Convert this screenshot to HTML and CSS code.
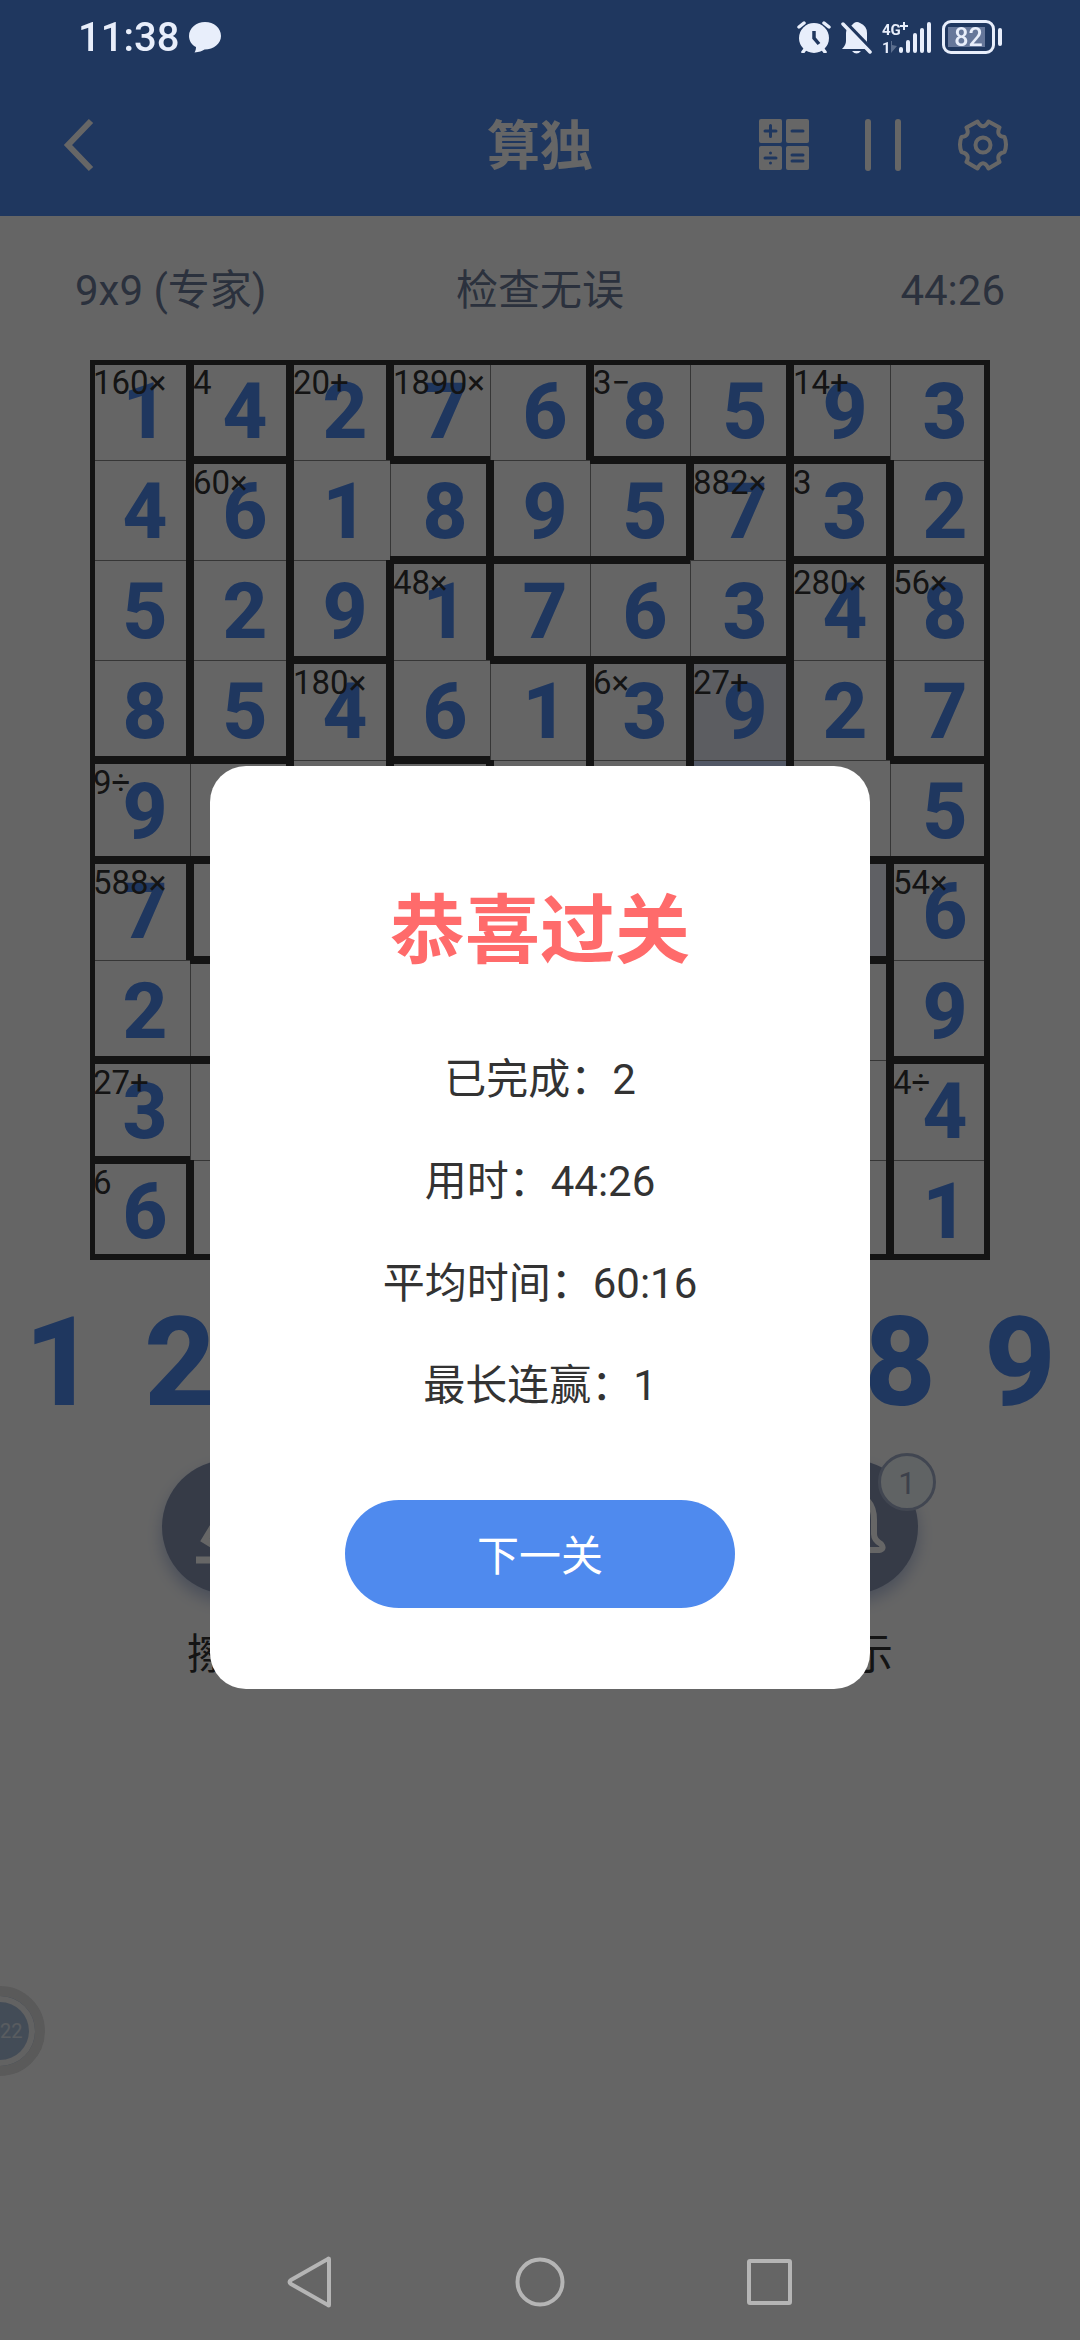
FILE: index.html
```html
<!DOCTYPE html>
<html lang="zh-CN">
<head>
    <meta charset="UTF-8">
    <meta name="viewport" content="width=device-width, initial-scale=1.0">
    <title>算独</title>
    <link rel="stylesheet" href="styles.css">
</head>
<body>

    <!-- Header -->
    <header class="header">
        <div class="status-bar">
            <div class="status-left">
                <span class="clock">11:38</span>
                <svg width="32" height="32" viewBox="0 0 32 32"><path fill="currentColor" d="M16 1C7.500 1 0 7 0 15c0 5 3 9 7 11 0 2-.5 4-1.500 5.500C10 31 13.500 30 15.500 28.500 25 28.500 32 22.500 32 15 32 7 25 1 16 1z"/></svg>
            </div>
            <div class="status-right">
                <svg width="34" height="32" viewBox="0 0 34 32">
                    <path d="M2 6l5-4M32 6l-5-4M6 31l3-4M28 31l-3-4" stroke="currentColor" stroke-width="3.500" stroke-linecap="round"/>
                    <circle cx="17" cy="17" r="15" fill="currentColor"/>
                    <path class="cut" d="M17 10v7l5 6" stroke-width="3.500"/>
                </svg>
                <svg class="mute" width="31" height="33" viewBox="0 0 31 33">
                    <path fill="currentColor" d="M10 5q2-2 3-3 3-2 6 0 7 3 7 10v9l3 7H1q4-4 4-8v-8q0-5 5-7zM11 30h9q-4.500 5-9 0z"/>
                    <path class="cut" d="M4 1l28 29" stroke-width="4"/>
                    <path d="M2 3l27 28" stroke="currentColor" stroke-width="3.500" stroke-linecap="round"/>
                </svg>
                <svg class="signal" width="50" height="33" viewBox="0 0 50 33" fill="currentColor">
                    <text x="0" y="14">4G</text>
                    <path d="M21 1h2v3h3v2h-3v3h-2V6h-3V4h3z"/>
                    <text x="0" y="32">1</text>
                    <path d="M9 20v12l6-7-5-1v-4z" opacity=".3"/>
                    <rect x="17" y="26" width="4" height="6" rx="2"/>
                    <rect x="24" y="19" width="4" height="13" rx="2"/>
                    <rect x="31" y="12" width="4" height="20" rx="2"/>
                    <rect x="38" y="7" width="4" height="25" rx="2"/>
                    <rect x="45" y="1" width="4" height="31" rx="2"/>
                </svg>
                <div class="battery">82</div>
            </div>
        </div>
        <div class="toolbar">
            <button class="icon-btn" aria-label="返回">
                <svg width="32" height="54" viewBox="0 0 32 54" fill="none" stroke="currentColor" stroke-width="6"><path d="M28 3L5 27l23 24"/></svg>
            </button>
            <h1 class="title">算独</h1>
            <div class="toolbar-actions">
                <button class="icon-btn" aria-label="运算">
                    <svg width="50" height="52" viewBox="0 0 50 52">
                        <g fill="currentColor">
                            <rect width="23" height="24" rx="2"/><rect x="27" width="23" height="24" rx="2"/>
                            <rect y="27" width="23" height="24" rx="2"/><rect x="27" y="27" width="23" height="24" rx="2"/>
                        </g>
                        <g class="ops">
                            <path d="M6 12h11M11.500 6.500v11M33 12h11M6 39h11M33 36h11M33 42h11"/>
                            <path d="M11.500 34v.1M11.500 44v.1"/>
                        </g>
                    </svg>
                </button>
                <button class="icon-btn" aria-label="暂停">
                    <svg width="36" height="52" viewBox="0 0 36 52" fill="currentColor"><rect width="6" height="52" rx="3"/><rect x="30" width="6" height="52" rx="3"/></svg>
                </button>
                <button class="icon-btn" aria-label="设置">
                    <svg width="52" height="52" viewBox="0 0 51 52" fill="none" stroke="currentColor" stroke-width="4" stroke-linejoin="round">
                        <path d="M20 2.500L9 8.500Q13 17 4 18Q1 25.500 4 33Q13 35 9 43L20 49.500Q25.500 39 31 49.500L42 43Q38 35 47 33Q50 25.500 47 18Q38 17 42 8.500L31 2.500Q25.500 12 20 2.500z"/>
                        <circle cx="25.500" cy="26" r="7.500"/>
                    </svg>
                </button>
            </div>
        </div>
    </header>

    <!-- Game -->
    <main class="game">
        <div class="info">
            <span>9x9 (专家)</span>
            <span>检查无误</span>
            <span class="info-time">44:26</span>
        </div>

        <div class="board" id="board"></div>

        <div class="keypad">
            <button>1</button>
            <button>2</button>
            <button>3</button>
            <button>4</button>
            <button>5</button>
            <button>6</button>
            <button>7</button>
            <button>8</button>
            <button>9</button>
        </div>

        <div class="tools">
            <button class="tool">
                <span class="tool-circle">
                    <svg viewBox="0 0 134 134" fill="none" stroke="currentColor" stroke-width="7"><path d="M34 100h66M43 80l28-46 26 16-28 46z"/></svg>
                </span>
                擦除
            </button>
            <button class="tool">
                <span class="tool-circle">
                    <svg viewBox="0 0 134 134" fill="none" stroke="currentColor" stroke-width="7"><path d="M40 94l4-18 38-38 14 14-38 38z"/></svg>
                </span>
                笔记
            </button>
            <button class="tool">
                <span class="tool-circle">
                    <svg viewBox="0 0 134 134" fill="none" stroke="currentColor" stroke-width="6" stroke-linecap="round" stroke-linejoin="round"><path d="M67 34q-22 2-22 26v14q0 6-6 10-6 6 0 6h56q6-1 2-6-7-4-7-10V60q0-24-23-26zM59 101h16"/></svg>
                    <span class="badge">1</span>
                </span>
                提示
            </button>
        </div>
    </main>

    <div class="ball">22</div>

    <!-- System navigation -->
    <nav class="nav-bar">
        <button class="icon-btn" aria-label="后退"><svg width="50" height="52" viewBox="0 0 50 52"><path d="M44 3v46q0 1-1 0L6 28q-3-2 0-4L43 3q1-1 1 0z"/></svg></button>
        <button class="icon-btn" aria-label="主屏幕"><svg width="50" height="52" viewBox="0 0 50 52"><circle cx="25" cy="26" r="22.500"/></svg></button>
        <button class="icon-btn" aria-label="最近任务"><svg width="50" height="52" viewBox="0 0 50 52"><rect x="4" y="5" width="41" height="42" rx="1"/></svg></button>
    </nav>

    <!-- Win dialog -->
    <div class="overlay">
        <div class="dialog" role="dialog" aria-labelledby="winTitle">
            <h2 id="winTitle">恭喜过关</h2>
            <p>已完成：2</p>
            <p>用时：44:26</p>
            <p>平均时间：60:16</p>
            <p>最长连赢：1</p>
            <button class="next-btn">下一关</button>
        </div>
    </div>

    <script src="script.js"></script>
</body>
</html>
```
FILE: styles.css
```css
* {
    box-sizing: border-box;
}

body {
    margin: 0;
    min-height: 100vh;
    display: flex;
    flex-direction: column;
    overflow-x: hidden;
    background-color: #fdfdfd;
    color: #333;
    font-family: Roboto, "Noto Sans CJK SC", sans-serif;
    font-size: 42px;
}

button {
    border: none;
    padding: 0;
    background: none;
    color: inherit;
    font: inherit;
    cursor: pointer;
}

svg {
    display: block;
}

/* Header */
.header {
    background-color: #4f8aee;
    color: #fff;
}

.status-bar {
    position: relative;
    z-index: 20;
    display: flex;
    justify-content: space-between;
    height: 74px;
    padding: 0 78px;
    color: #e8eefb;
}

.status-left,
.status-right {
    display: flex;
    align-items: center;
    gap: 10px;
}

.clock {
    font-size: 40px;
    font-weight: 500;
}

.cut {
    fill: none;
    stroke: #20375f;
}

.signal {
    overflow: visible;
    font-size: 15px;
    font-weight: 700;
}

/* Battery with a cap on the right */
.battery {
    position: relative;
    width: 53px;
    height: 34px;
    margin-right: 7px;
    border: 3px solid #e8eefb;
    border-radius: 9px;
    background: linear-gradient(#66779a, #66779a) 3px 4px / 37px 20px no-repeat;
    font-size: 25px;
    font-weight: 500;
    line-height: 30px;
    text-align: center;
}

.battery::after {
    content: "";
    position: absolute;
    top: 5px;
    right: -10px;
    width: 4px;
    height: 18px;
    border-radius: 2px;
    background-color: #e8eefb;
}

.toolbar {
    display: grid;
    grid-template-columns: 1fr auto 1fr;
    align-items: center;
    height: 142px;
    padding: 0 63px;
}

.title {
    margin: 0;
    padding-top: 4px;
    font-size: 53px;
    font-weight: 700;
    line-height: 60px;
}

.toolbar-actions {
    display: flex;
    justify-content: flex-end;
    gap: 56px;
    padding-right: 8px;
}

.ops {
    fill: none;
    stroke: #4f8aee;
    stroke-width: 3;
    stroke-linecap: round;
}

/* Game */
.info {
    display: grid;
    grid-template-columns: 1fr auto 1fr;
    align-items: baseline;
    height: 144px;
    padding: 45px 75px 0;
    color: #6b7a99;
    line-height: 60px;
}

.info-time {
    text-align: right;
}

.board {
    display: grid;
    grid-template-columns: repeat(9, 1fr);
    margin: 0 90px;
}

/* Cage walls are inner shadows, half of each wall in either cell */
.cell {
    --t: 0px;
    --r: 0px;
    --b: 0px;
    --l: 0px;
    position: relative;
    display: flex;
    align-items: center;
    justify-content: center;
    aspect-ratio: 1;
    padding: 4px 0 0 10px;
    color: #4f8aee;
    font-size: 78px;
    font-weight: 800;
    line-height: 1;
    box-shadow:
        inset var(--l) 0 #333,
        inset calc(-1 * var(--r)) 0 #333,
        inset 0 var(--t) #333,
        inset 0 calc(-1 * var(--b)) #333,
        inset 1px 1px #888;
}

.wall-t { --t: 4px; }
.wall-r { --r: 4px; }
.wall-b { --b: 4px; }
.wall-l { --l: 4px; }
.edge-t { --t: 5px; }
.edge-r { --r: 6px; }
.edge-b { --b: 6px; }
.edge-l { --l: 5px; }

.cage-mate {
    background-color: #e6e9f2;
}

.selected {
    background-color: #cddcff;
}

.same-digit {
    background-color: #edf0fb;
}

.clue {
    position: absolute;
    top: 5px;
    left: 3px;
    color: #333;
    font-size: 33px;
    font-weight: 400;
    line-height: 36px;
}

.keypad {
    display: grid;
    grid-template-columns: repeat(9, 1fr);
    height: 200px;
    color: #4f8aee;
    font-size: 124px;
    font-weight: 800;
    line-height: 206px;
}

.tools {
    display: flex;
    justify-content: space-between;
    padding: 0 162px;
}

.tool {
    line-height: 60px;
}

.tool-circle {
    position: relative;
    display: block;
    width: 134px;
    height: 134px;
    margin-bottom: 31px;
    border-radius: 50%;
    background-color: #8794b2;
    box-shadow: 0 8px 16px rgba(80, 110, 180, 0.4);
    color: #fff;
}

.badge {
    position: absolute;
    top: -7px;
    right: -18px;
    width: 58px;
    height: 58px;
    border: 3px solid #a4b0ca;
    border-radius: 50%;
    background-color: #f0f7fa;
    color: #98a3bb;
    font-size: 31px;
    line-height: 56px;
}

/* Floating ball, docked to the left edge */
.ball {
    position: fixed;
    top: 1986px;
    left: -45px;
    width: 90px;
    height: 90px;
    border: 10px solid #e0e0e0;
    border-radius: 50%;
    background-color: #a9bfda;
    box-shadow: inset 0 0 0 6px #f4f4f4;
    color: #dfe7f0;
    font-size: 20px;
    line-height: 70px;
    padding-left: 35px;
}

.nav-bar {
    position: relative;
    z-index: 20;
    display: flex;
    align-items: center;
    justify-content: center;
    gap: 180px;
    height: 116px;
    margin-top: auto;
    color: #b5b5b5;
}

.nav-bar svg {
    fill: none;
    stroke: currentColor;
    stroke-width: 4;
}

/* Win dialog */
.overlay {
    position: fixed;
    inset: 0;
    z-index: 10;
    display: flex;
    align-items: center;
    justify-content: center;
    padding-top: 115px;
    background-color: rgba(0, 0, 0, 0.6);
}

.dialog {
    display: flex;
    flex-direction: column;
    align-items: center;
    width: 61.1%;
    padding: 115px 0 81px;
    border-radius: 36px;
    background-color: #fff;
}

.dialog h2 {
    margin: 0 0 48px;
    color: #ff6b6b;
    font-size: 75px;
    font-weight: 700;
    line-height: 100px;
}

.dialog p {
    margin: 0;
    line-height: 102px;
}

.next-btn {
    width: 390px;
    height: 108px;
    margin-top: 63px;
    padding-bottom: 4px;
    border-radius: 54px;
    background-color: #4f8aee;
    color: #fff;
}
```
FILE: script.js
```js
const size = 9;

// One letter per cage
const cages = [
    "ABCDDEEFF",
    "AGCCDDHIF",
    "AGCJHHHKL",
    "AGMJJNOKL",
    "PPMQJNOKK",
    "RSSSSSSTU",
    "RRRRRVVVU",
    "WWWWWVVVX",
    "YWWWWWVVX"
];

const digits = [
    "142768593",
    "461895732",
    "529176348",
    "854613927",
    "9       5",
    "7       6",
    "2       9",
    "3       4",
    "6       1"
];

// Label of each cage, drawn in its first cell
const clues = {
    A: "160×", B: "4", C: "20+", D: "1890×", E: "3−", F: "14+",
    G: "60×", H: "882×", I: "3", J: "48×", K: "280×", L: "56×",
    M: "180×", N: "6×", O: "27+", P: "9÷", R: "588×", U: "54×",
    W: "27+", X: "4÷", Y: "6"
};

const marks = { "3,6": "cage-mate", "4,6": "selected", "5,7": "same-digit" };

const sides = [["t", -1, 0], ["r", 0, 1], ["b", 1, 0], ["l", 0, -1]];
const board = document.getElementById("board");
const labelled = new Set();

for (let row = 0; row < size; row++) {
    for (let col = 0; col < size; col++) {
        const cage = cages[row][col];
        const cell = document.createElement("div");
        cell.className = "cell";

        sides.forEach(([side, dr, dc]) => {
            const next = cages[row + dr] ? cages[row + dr][col + dc] : undefined;
            if (next === undefined) {
                cell.classList.add("edge-" + side);
            } else if (next !== cage) {
                cell.classList.add("wall-" + side);
            }
        });

        const mark = marks[row + "," + col];
        if (mark) {
            cell.classList.add(mark);
        }

        cell.textContent = digits[row][col].trim();

        if (clues[cage] && !labelled.has(cage)) {
            labelled.add(cage);
            const clue = document.createElement("span");
            clue.className = "clue";
            clue.textContent = clues[cage];
            cell.appendChild(clue);
        }

        board.appendChild(cell);
    }
}
```
